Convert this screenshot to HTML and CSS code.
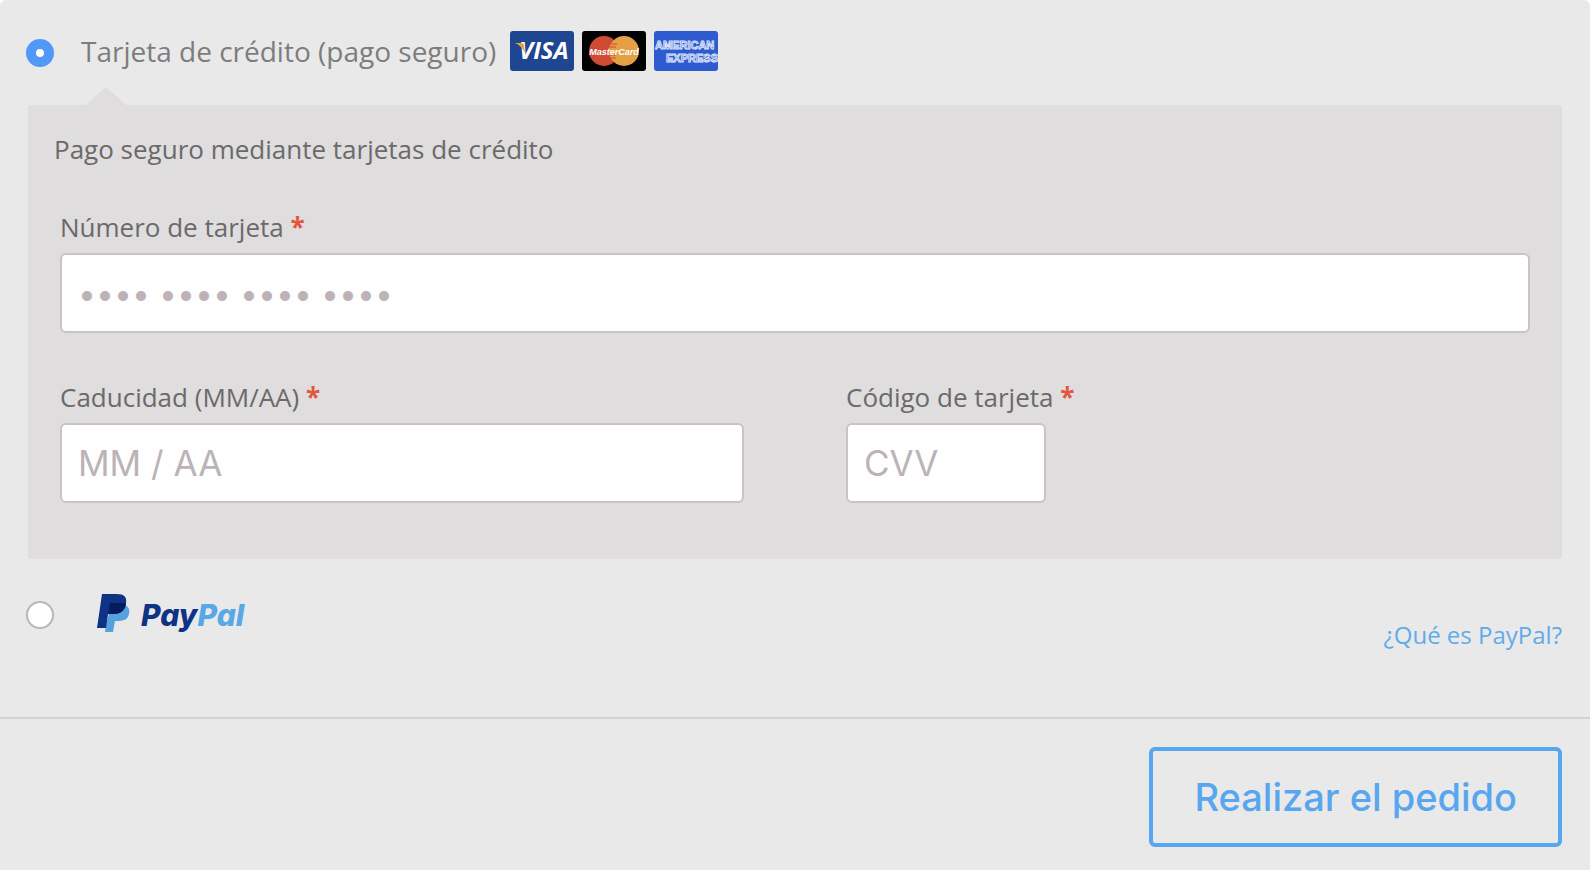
FILE: index.html
```html
<!DOCTYPE html>
<html lang="es">
<head>
  <meta charset="UTF-8" />
  <meta name="viewport" content="width=device-width, initial-scale=1.0" />
  <title>Realizar el pedido</title>
  <link rel="stylesheet" href="styles.css">
</head>
<body>
  <form class="payment">
    <div class="methods">
      <div class="method">
        <input type="radio" class="radio" id="payCard" name="payment" checked />
        <label class="method-label" for="payCard">Tarjeta de crédito (pago seguro)</label>
        <div class="cards">
          <svg class="card-icon" viewBox="0 0 64 40" role="img" aria-label="Visa">
            <rect width="64" height="40" rx="3" fill="#1f4690" />
            <text x="9" y="28" class="visa-text">VISA</text>
            <path d="M5 12h6c2 0 3 1 3 3l1 7c-2-4-5-8-10-10z" fill="#e6a23c" />
          </svg>
          <svg class="card-icon" viewBox="0 0 64 40" role="img" aria-label="MasterCard">
            <rect width="64" height="40" rx="3" fill="#000" />
            <circle cx="22" cy="20" r="15" fill="#cf4b34" />
            <circle cx="42" cy="20" r="15" fill="#e5a046" />
            <path d="M29 13h6M28 16h6M27 24h7M28 27h6" stroke="#cf4b34" stroke-width="1" />
            <text x="32" y="24" class="mc-text">MasterCard</text>
          </svg>
          <svg class="card-icon" viewBox="0 0 64 40" role="img" aria-label="American Express">
            <rect width="64" height="40" rx="3" fill="#2f5bd0" />
            <text x="1" y="18" class="amex-text">AMERICAN</text>
            <text x="12" y="31" class="amex-text">EXPRESS</text>
          </svg>
        </div>
      </div>

      <div class="card-box">
        <p class="description">Pago seguro mediante tarjetas de crédito</p>
        <div class="fields">
          <div class="field field-wide">
            <label for="cardNumber">Número de tarjeta <span class="required">*</span></label>
            <input type="text" class="number" id="cardNumber" placeholder="•••• •••• •••• ••••" />
          </div>
          <div class="field">
            <label for="cardExpiry">Caducidad (MM/AA) <span class="required">*</span></label>
            <input type="text" id="cardExpiry" placeholder="MM / AA" />
          </div>
          <div class="field">
            <label for="cardCode">Código de tarjeta <span class="required">*</span></label>
            <input type="text" class="code" id="cardCode" placeholder="CVV" />
          </div>
        </div>
      </div>

      <div class="method method-paypal">
        <input type="radio" class="radio" id="payPaypal" name="payment" />
        <label class="paypal" for="payPaypal">
          <svg class="paypal-logo" viewBox="0 0 152 40" role="img" aria-label="PayPal">
            <path d="M28 12c4 2 5 5 4 9-1 5-5 7-11 7h-3l-2 11H8l1-7 4-16z" fill="#55a2de" />
            <path d="M5 1h15c7 0 10 3 9 9-1 8-6 11-13 11h-5L9 35H0z" fill="#0e3284" />
            <path d="M13 10h15c1 0 1 0 1 1-1 7-6 10-13 10h-5z" fill="#061c5f" />
            <text x="44" y="33" class="paypal-text"><tspan fill="#0e3284">Pay</tspan><tspan fill="#58a7e6">Pal</tspan></text>
          </svg>
        </label>
        <a class="what-is" href="#">¿Qué es PayPal?</a>
      </div>
    </div>

    <div class="place-order">
      <button type="submit" class="btn">Realizar el pedido</button>
    </div>
  </form>
</body>
</html>
```

FILE: styles.css
```css
* {
  box-sizing: border-box;
}

body {
  margin: 0;
  background: #fff;
  font-family: 'Open Sans', sans-serif;
  font-size: 26px;
  color: #6a6a6a;
}

.payment {
  margin-right: 2px;
  min-height: 100vh;
  background: #e9e9e9;
  border-radius: 6px 6px 0 0;
}

.methods {
  padding: 28px 28px 58px;
  border-bottom: 2px solid #d4d2d3;
}

.method {
  display: flex;
  align-items: center;
}

.radio {
  appearance: none;
  flex: none;
  width: 28px;
  height: 28px;
  margin: 4px 0 0 -2px;
  border: 2px solid #b8b8b8;
  border-radius: 50%;
  background: #fff;
}

.radio:checked {
  border: 10px solid #5299f5;
}

.method-label {
  margin-left: 27px;
  font-size: 28px;
  line-height: 46px;
  color: #7d7d7d;
}

.cards {
  display: flex;
  gap: 8px;
  margin-left: 14px;
}

.card-icon {
  width: 64px;
  height: 40px;
}

.visa-text {
  font: italic bold 24px 'Open Sans', sans-serif;
  fill: #fff;
}

.mc-text {
  font: italic bold 9px 'Liberation Sans', sans-serif;
  fill: #fff;
  text-anchor: middle;
}

.amex-text {
  font: bold 11px 'Liberation Sans', sans-serif;
  fill: #2f5bd0;
  stroke: #dbe3f8;
  stroke-width: 1px;
}

.card-box {
  position: relative;
  margin-top: 31px;
  padding: 26px 32px 56px;
  border-radius: 4px;
  background: #dfddde;
}

/* arrow pointing at the selected method */
.card-box::before {
  content: '';
  position: absolute;
  top: -18px;
  left: 58px;
  border: 20px solid transparent;
  border-top: 0;
  border-bottom: 18px solid #dfddde;
}

.description {
  margin: 0 0 42px -6px;
  line-height: 36px;
}

.fields {
  display: grid;
  grid-template-columns: 1fr 1fr;
  gap: 46px 102px;
}

.field {
  display: flex;
  flex-direction: column;
  gap: 8px;
}

.field-wide {
  grid-column: 1 / -1;
}

.field label {
  line-height: 36px;
}

.required {
  color: #e2553f;
  font-weight: bold;
}

.field input {
  width: 100%;
  height: 80px;
  padding: 0 16px;
  border: 2px solid #c9c3c6;
  border-radius: 6px;
  background: #fff;
  font-family: Inter, sans-serif;
  font-size: 35px;
  color: #6a6a6a;
}

.field .number {
  font-size: 32px;
}

.field input::placeholder {
  color: #bbb3b8;
  opacity: 1;
}

.field .code {
  width: 200px;
}

.method-paypal {
  margin-top: 30px;
  min-height: 70px;
}

.method-paypal .radio {
  margin-bottom: 22px;
}

.paypal {
  margin: 0 auto 22px 43px;
}

.paypal-logo {
  display: block;
  width: 152px;
  height: 40px;
}

.paypal-text {
  font: italic 800 30px Inter, sans-serif;
}

.what-is {
  align-self: flex-end;
  margin-bottom: 6px;
  color: #62abea;
  font-size: 24px;
  line-height: 36px;
  text-decoration: none;
}

.place-order {
  display: flex;
  justify-content: flex-end;
  padding: 28px 28px 22px;
}

.btn {
  height: 100px;
  padding: 0 41px;
  border: 4px solid #58a6ef;
  border-radius: 6px;
  background: transparent;
  color: #58a6ef;
  font-family: Inter, sans-serif;
  font-size: 38px;
  font-weight: 500;
  cursor: pointer;
}
```
